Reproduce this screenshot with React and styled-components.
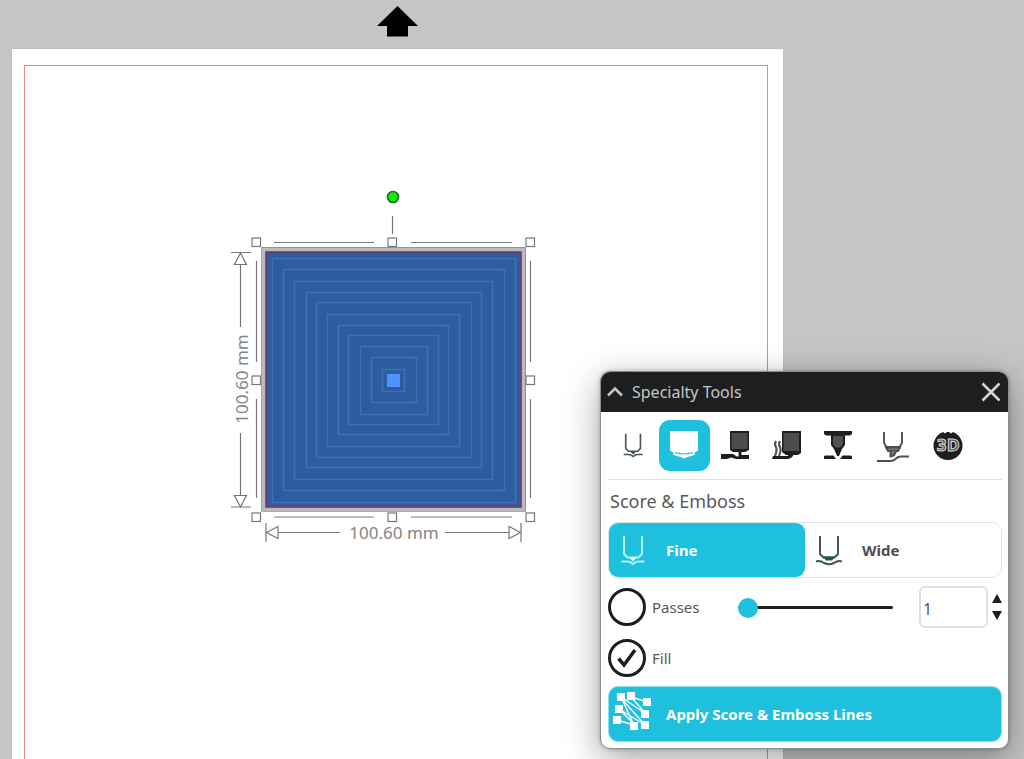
import React, { useState } from 'react';
import styled, { createGlobalStyle } from 'styled-components';

const cyan = '#1ec0de';
const ink = '#1d1e1f';

const GlobalStyle = createGlobalStyle`
  *, *::before, *::after { box-sizing: border-box; }
  body {
    margin: 0;
    background: #c5c5c5;
    color: #58585a;
    font-family: "Noto Sans", "Open Sans", sans-serif;
    font-size: 16px;
  }
  button, input { font: inherit; color: inherit; }
  svg { display: block; }
`;

const Workspace = styled.main`
  position: relative;
  min-height: 100vh;
  padding: 49px 241px 0 12px;
  overflow: hidden;
`;

const Sheet = styled.section`
  min-height: calc(100vh - 49px);
  padding: 16px 15px 0 12px;
  background: #fff;
  box-shadow: 0 0 1px #aaa;
  display: flex;
`;

const CutBorder = styled.div`
  flex: 1;
  border: solid #e98389;
  border-width: 1px 1px 0;
`;

const FeedArrow = styled.svg`
  position: absolute;
  left: 377px;
  top: 6px;
`;

const Artwork = styled.svg`
  position: absolute;
  left: 220px;
  top: 180px;
`;

const Dimension = styled.text`
  font-size: 17px;
  fill: #858585;
  text-anchor: middle;
`;

const Panel = styled.aside`
  position: absolute;
  right: 15px;
  bottom: 10px;
  width: 409px;
  border: 1px solid #8d8d8d;
  border-radius: 10px;
  background: #fff;
  overflow: hidden;
  box-shadow: 0 10px 36px rgba(0, 0, 0, 0.36), 0 0 4px rgba(0, 0, 0, 0.25);
`;

const PanelHeader = styled.header`
  display: flex;
  align-items: center;
  height: 40px;
  padding: 0 7px 0 5px;
  background: ${ink};
  color: #c6c6c6;
`;

const PanelTitle = styled.h1`
  flex: 1;
  margin: 0 0 0 8px;
  font-size: 16px;
  font-weight: 400;
`;

const IconButton = styled.button`
  padding: 0;
  border: 0;
  background: none;
  cursor: pointer;
`;

const PanelBody = styled.form`
  padding: 8px 6px 6px 7px;
`;

const Toolbar = styled.div`
  display: flex;
  height: 60px;
  padding-bottom: 9px;
  border-bottom: 1px solid #dedede;
`;

const ToolButton = styled(IconButton)`
  display: grid;
  place-items: center;
  width: 51px;
  height: 51px;
  border-radius: 11px;
  margin-left: ${(p) => (p.$spaced ? 4 : 0)}px;
  background: ${(p) => (p.$active ? cyan : 'none')};
`;

const SectionTitle = styled.h2`
  margin: 0;
  padding-left: 2px;
  height: 42px;
  font-size: 18px;
  font-weight: 400;
  line-height: 42px;
`;

const Segments = styled.div`
  display: flex;
  height: 56px;
  border: 1px solid #dfe3e3;
  border-radius: 10px;
`;

const Segment = styled.label`
  flex: 1;
  display: flex;
  align-items: center;
  gap: 16px;
  padding-left: 8px;
  border-radius: 9px;
  font-size: 15px;
  font-weight: 700;
  color: ${(p) => (p.$active ? '#fff' : '#4d4d4f')};
  background: ${(p) => (p.$active ? cyan : 'none')};
  cursor: pointer;
`;

const HiddenInput = styled.input`
  position: absolute;
  opacity: 0;
  pointer-events: none;
`;

const Row = styled.div`
  display: flex;
  align-items: center;
  height: ${(p) => p.$height}px;
`;

const CheckLabel = styled.label`
  display: flex;
  align-items: center;
  gap: 6px;
  width: 130px;
  font-size: 15px;
  cursor: pointer;
`;

const Tick = styled.span`
  display: grid;
  place-items: center;
  width: 38px;
  height: 38px;
  border: 3px solid ${ink};
  border-radius: 50%;
`;

const Slider = styled.input`
  flex: 1;
  height: 20px;
  margin: 0 26px 0 0;
  appearance: none;
  background: none;
  &::-webkit-slider-runnable-track {
    height: 3px;
    border-radius: 2px;
    background: ${ink};
  }
  &::-webkit-slider-thumb {
    appearance: none;
    width: 20px;
    height: 20px;
    margin-top: -8px;
    border-radius: 50%;
    background: ${cyan};
  }
`;

const NumberBox = styled.input`
  width: 69px;
  height: 42px;
  padding: 4px 2px 0;
  border: 2px solid #dfdfdf;
  border-radius: 6px;
  background: #fff;
`;

const Stepper = styled.div`
  display: grid;
  gap: 8px;
  margin-left: 4px;
`;

const ApplyButton = styled.button`
  display: flex;
  align-items: center;
  gap: 13px;
  width: 100%;
  height: 56px;
  margin-top: 6px;
  padding: 0 4px;
  border: 1px solid #8fdceb;
  border-radius: 10px;
  background: ${cyan};
  color: #fff;
  font-size: 15px;
  font-weight: 700;
  cursor: pointer;
`;

const rings = [
  [52, 78, 295, 322], [63, 89, 284, 310], [74, 101, 272, 299],
  [86, 112, 261, 287], [96, 122, 251, 277], [107, 134, 239, 266],
  [118, 145, 228, 254], [128, 155, 218, 244], [140, 166, 207, 234],
  [151, 177, 196, 222], [162, 189, 184, 211],
];

const handles = [
  [36, 62], [172, 62], [310, 62],
  [36, 200], [310, 200],
  [36, 337], [172, 337], [310, 337],
];

function SelectedDesign() {
  return (
    <Artwork width="330" height="380" viewBox="0 0 330 380" fill="none" role="img" aria-label="Selected square">
      <rect x="41" y="67" width="265" height="265" fill="#bcb9ba" />
      <path d="M41.500 67.500H305.500V331.500" stroke="#959595" />
      <path d="M41.500 67.500V331.500H305.500" stroke="#a8a8a8" />
      <rect x="46" y="72" width="255" height="255" fill="#2d5c9f" stroke="#703b66" strokeWidth="1.600" />
      {rings.map(([l, t, r, b]) => (
        <rect key={l} x={l + 0.5} y={t + 0.5} width={r - l} height={b - t} stroke="#3f70bc" strokeWidth="1.500" />
      ))}
      <rect x="167" y="194" width="13" height="13" fill="#4e93ff" />
      <g stroke="#777" strokeWidth="1.200">
        <path d="M54 62.500H154M191 62.500H292M54 337H154M191 337H292M36.500 81V182M36.500 219V318M310.500 81V182M310.500 219V318M172.500 36V54" />
        <path d="M11 72.500H31M11 327H31M20.500 84V147M20.500 253V315" />
        <path d="M20.500 73L26.500 84.500H14.500ZM20.500 327L14.500 315.500H26.500Z" fill="#fff" />
        <path d="M46 343V362M301 343V362M58 352.500H120M225 352.500H289" />
        <path d="M46.500 352.500L58 346.500V358.500ZM300.500 352.500L289 346.500V358.500Z" fill="#fff" />
        {handles.map(([x, y]) => (
          <rect key={`${x}-${y}`} x={x - 4} y={y - 4} width="8.500" height="8.500" fill="#fff" />
        ))}
      </g>
      <circle cx="173" cy="17" r="5.500" fill="#0cf000" stroke="#176b20" strokeWidth="1.600" />
      <Dimension x="174" y="359">100.60 mm</Dimension>
      <Dimension x="0" y="0" transform="translate(28 199) rotate(-90)">100.60 mm</Dimension>
    </Artwork>
  );
}

function PenIcon({ color = '#4b5354', tip = '#1f5a50', wide = false, size = 33 }) {
  return (
    <svg width={size} height={size} viewBox="0 0 33 33" fill="none" stroke={color} strokeWidth="2">
      <path d="M7 2V20L10.500 23.500H21.500L25 20V2" />
      <path d={wide ? 'M9.500 22.500H22.500L19 26.500H13Z' : 'M12 23.500H20L16 27.500Z'} fill={tip} stroke="none" />
      {wide ? (
        <path d="M3 27.500C7 26 9 27.500 11 29Q16 31.500 21 29C23 27.500 25 26 29 27.500" />
      ) : (
        <path d="M4.500 27.500H10.500Q13.500 27.500 16 30Q18.500 27.500 21.500 27.500H27.500" />
      )}
    </svg>
  );
}

const toolIcons = {
  sketch: <PenIcon size={27} />,
  emboss: (
    <svg width="34" height="34" viewBox="0 0 34 34" fill="#fff">
      <path d="M2 2H30V21L28 23H4L2 21Z" />
      <path d="M6 22.500V25.500Q10 27 13.500 27.500L16 29L18.500 27.500Q22 27 26 25.500V22.500" stroke="#fff" strokeWidth="1.300" />
      <path d="M7 23.500Q16 26.500 25 23.500" fill="none" stroke={cyan} strokeWidth="1.200" />
    </svg>
  ),
  deboss: (
    <svg width="32" height="32" viewBox="0 0 32 32" fill={ink}>
      <path d="M10 1H29V20L25 22H13L10 20Z" />
      <path d="M11.500 3H27.500V19H11.500Z" fill="#4b4c4d" />
      <path d="M18.500 21H21.500V25H29V29H16L11 27.500L7 29H1V24H13L17 26.500H18.500Z" />
    </svg>
  ),
  heat: (
    <svg width="32" height="32" viewBox="0 0 32 32" fill={ink}>
      <path d="M11 1H30V23L27 25H15L11 22Z" />
      <path d="M12.500 3H28V21H12.500Z" fill="#4b4c4d" />
      <path d="M5 11Q3 14 5 17Q6.500 20 4 26M9 11Q7 14 9 17Q10.500 20 8 26" fill="none" stroke="#555" strokeWidth="2.200" />
      <path d="M2 26H17V24H22V26Q20 29 17 29H1Z" />
    </svg>
  ),
  engrave: (
    <svg width="32" height="32" viewBox="0 0 32 32" fill={ink}>
      <path d="M2 1H30V4L28 5.500H23V15L20 19L17 26H15L12 19L9 15V5.500H4L2 4Z" />
      <path d="M11 6H21V14L18.500 17.500H13.500L11 14Z" fill="#505152" />
      <path d="M3 25.500H11.500L14 29H2V26.500ZM20.500 25.500H29L30 26.500V29H18Z" />
    </svg>
  ),
  stipple: (
    <svg width="34" height="34" viewBox="0 0 34 34" fill="none" stroke="#4b5052" strokeWidth="1.900">
      <path d="M8 3V14L10.500 18H23.500L26 14V3" />
      <path d="M10 18.500L12 22H22L24 18.500Z" fill="#777" />
      <path d="M14.500 22.500V27.500L18 26.500L20 22.500" fill="#777" />
      <path d="M1 32H14Q18 32 20 29.500Q22 27.500 25 27.500H33" />
    </svg>
  ),
  threeD: (
    <svg width="32" height="32" viewBox="0 0 32 32">
      <path d="M11 2L13 3.500L15 2H17L19 3.500L21 2A14.500 14.500 0 1 1 11 2Z" fill={ink} />
      <text x="16" y="21" textAnchor="middle" fontFamily="DejaVu Sans" fontWeight="700" fontSize="15" fill="#555" stroke="#dcdcdc" strokeWidth="1">3D</text>
    </svg>
  ),
};

const tools = [
  ['sketch', 'Sketch'],
  ['emboss', 'Score and emboss'],
  ['deboss', 'Deboss'],
  ['heat', 'Heat'],
  ['engrave', 'Engrave'],
  ['stipple', 'Stipple'],
  ['threeD', '3D'],
];

function ApplyIcon() {
  return (
    <svg width="40" height="44" viewBox="0 0 40 44" fill="#fff">
      <path
        d="M7 5L32 33M18 5L34 10M18 5L33 22M6 17L22 33M6 17L32 33M4 28L21 33M8 5L33 22M8 5L21 33"
        stroke="#fff"
        strokeWidth="1.400"
      />
      {[[4, 1], [14, 0], [30, 6], [2, 13], [28, 18], [0, 24], [17, 30], [28, 29]].map(([x, y]) => (
        <rect key={`${x}-${y}`} x={x} y={y} width="8" height="8" />
      ))}
    </svg>
  );
}

function CheckMark() {
  return (
    <svg width="20" height="20" viewBox="0 0 20 20" fill="none" stroke={ink} strokeWidth="3.500">
      <path d="M1.500 10.500L7 17L18 2" />
    </svg>
  );
}

function StepArrow({ down }) {
  return (
    <svg width="10" height="9" viewBox="0 0 10 9" fill={ink}>
      <path d={down ? 'M0 0H10L5 9Z' : 'M0 9H10L5 0Z'} />
    </svg>
  );
}

export default function App() {
  const [tool, setTool] = useState('emboss');
  const [width, setWidth] = useState('fine');
  const [multi, setMulti] = useState(false);
  const [fill, setFill] = useState(true);
  const [passes, setPasses] = useState(1);

  return (
    <Workspace>
      <GlobalStyle />
      <FeedArrow width="41" height="31" viewBox="0 0 41 31" aria-hidden="true">
        <path d="M20.500 0L41 20H31V30.500H10V20H0Z" />
      </FeedArrow>
      <Sheet><CutBorder /></Sheet>
      <SelectedDesign />

      <Panel>
        <PanelHeader>
          <IconButton type="button" aria-label="Collapse">
            <svg width="18" height="18" viewBox="0 0 18 18" fill="none" stroke="#c6c6c6" strokeWidth="2.500">
              <path d="M2 12.500L9 5.500L16 12.500" />
            </svg>
          </IconButton>
          <PanelTitle>Specialty Tools</PanelTitle>
          <IconButton type="button" aria-label="Close">
            <svg width="20" height="20" viewBox="0 0 20 20" fill="none" stroke="#d2d2d2" strokeWidth="2.600">
              <path d="M1.500 1.500L18.500 18.500M18.500 1.500L1.500 18.500" />
            </svg>
          </IconButton>
        </PanelHeader>

        <PanelBody onSubmit={(e) => e.preventDefault()}>
          <Toolbar>
            {tools.map(([id, label], i) => (
              <ToolButton
                key={id}
                type="button"
                aria-label={label}
                $active={tool === id}
                $spaced={i > 4}
                onClick={() => setTool(id)}
              >
                {toolIcons[id]}
              </ToolButton>
            ))}
          </Toolbar>

          <SectionTitle>Score &amp; Emboss</SectionTitle>
          <Segments role="radiogroup" aria-label="Line width">
            <Segment $active={width === 'fine'}>
              <HiddenInput type="radio" name="width" checked={width === 'fine'} onChange={() => setWidth('fine')} />
              <PenIcon color={width === 'fine' ? '#b5f0f8' : undefined} tip={width === 'fine' ? '#e3ffff' : undefined} />
              Fine
            </Segment>
            <Segment $active={width === 'wide'}>
              <HiddenInput type="radio" name="width" checked={width === 'wide'} onChange={() => setWidth('wide')} />
              <PenIcon wide color={width === 'wide' ? '#b5f0f8' : undefined} tip={width === 'wide' ? '#e3ffff' : undefined} />
              Wide
            </Segment>
          </Segments>

          <Row $height={58}>
            <CheckLabel>
              <HiddenInput type="checkbox" checked={multi} onChange={() => setMulti(!multi)} />
              <Tick>{multi && <CheckMark />}</Tick>
              Passes
            </CheckLabel>
            <Slider
              type="range"
              min="1"
              max="10"
              aria-label="Passes slider"
              value={passes}
              onChange={(e) => setPasses(Number(e.target.value))}
            />
            <NumberBox
              type="text"
              inputMode="numeric"
              aria-label="Number of passes"
              value={passes}
              onChange={(e) => setPasses(Number(e.target.value) || 1)}
            />
            <Stepper>
              <IconButton type="button" aria-label="More passes" onClick={() => setPasses(Math.min(10, passes + 1))}>
                <StepArrow />
              </IconButton>
              <IconButton type="button" aria-label="Fewer passes" onClick={() => setPasses(Math.max(1, passes - 1))}>
                <StepArrow down />
              </IconButton>
            </Stepper>
          </Row>

          <Row $height={44}>
            <CheckLabel>
              <HiddenInput type="checkbox" checked={fill} onChange={() => setFill(!fill)} />
              <Tick>{fill && <CheckMark />}</Tick>
              Fill
            </CheckLabel>
          </Row>

          <ApplyButton type="submit">
            <ApplyIcon />
            Apply Score &amp; Emboss Lines
          </ApplyButton>
        </PanelBody>
      </Panel>
    </Workspace>
  );
}
